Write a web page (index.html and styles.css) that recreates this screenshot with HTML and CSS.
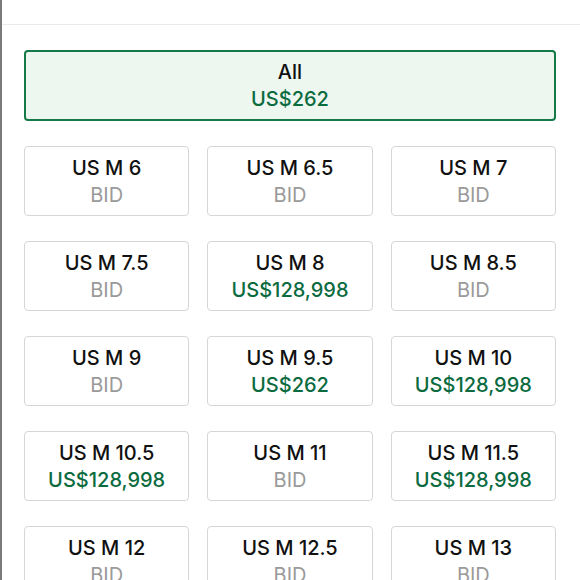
FILE: index.html
```html
<!DOCTYPE html>
<html lang="en">
<head>
<meta charset="utf-8">
<title>Sizes</title>
<link rel="stylesheet" href="styles.css">
</head>
<body>
<div class="panel">
  <div class="header"></div>
  <div class="content">
    <button class="opt opt-all">
      <span class="size">All</span>
      <span class="price">US$262</span>
    </button>
    <div class="grid">
      <button class="opt"><span class="size">US M 6</span><span class="bid">BID</span></button>
      <button class="opt"><span class="size">US M 6.5</span><span class="bid">BID</span></button>
      <button class="opt"><span class="size">US M 7</span><span class="bid">BID</span></button>
      <button class="opt"><span class="size">US M 7.5</span><span class="bid">BID</span></button>
      <button class="opt"><span class="size">US M 8</span><span class="price">US$128,998</span></button>
      <button class="opt"><span class="size">US M 8.5</span><span class="bid">BID</span></button>
      <button class="opt"><span class="size">US M 9</span><span class="bid">BID</span></button>
      <button class="opt"><span class="size">US M 9.5</span><span class="price">US$262</span></button>
      <button class="opt"><span class="size">US M 10</span><span class="price">US$128,998</span></button>
      <button class="opt"><span class="size">US M 10.5</span><span class="price">US$128,998</span></button>
      <button class="opt"><span class="size">US M 11</span><span class="bid">BID</span></button>
      <button class="opt"><span class="size">US M 11.5</span><span class="price">US$128,998</span></button>
      <button class="opt"><span class="size">US M 12</span><span class="bid">BID</span></button>
      <button class="opt"><span class="size">US M 12.5</span><span class="bid">BID</span></button>
      <button class="opt"><span class="size">US M 13</span><span class="bid">BID</span></button>
    </div>
  </div>
</div>
</body>
</html>
```
FILE: styles.css
```css
html, body {
  margin: 0;
  padding: 0;
  background: #ffffff;
}
body {
  font-family: Inter, "Liberation Sans", sans-serif;
  overflow: hidden;
}
.panel {
  border-left: 2px solid #7a7a7a;
  min-height: 100vh;
  box-sizing: border-box;
}
.header {
  height: 24px;
  border-bottom: 1px solid #ebebeb;
}
.content {
  padding: 25px 24px 0 22px;
}
.opt {
  display: flex;
  flex-direction: column;
  align-items: center;
  justify-content: center;
  box-sizing: border-box;
  height: 70px;
  width: 100%;
  margin: 0;
  padding: 1px 0 0;
  background: #ffffff;
  border: 1px solid #d6d6d6;
  border-radius: 4px;
  font-family: inherit;
  font-size: 20px;
  line-height: 27px;
  letter-spacing: 0;
}
.opt-all {
  height: 71px;
  border: 2px solid #167a48;
  background: #edf7f0;
  margin-bottom: 25px;
}
.grid {
  display: grid;
  grid-template-columns: repeat(3, 1fr);
  column-gap: 18px;
  row-gap: 25px;
}
.size {
  color: #111111;
  font-weight: 500;
}
.price {
  color: #0b6b3f;
  font-weight: 450;
}
.bid {
  color: #9a9a9a;
  font-weight: 400;
}
```
